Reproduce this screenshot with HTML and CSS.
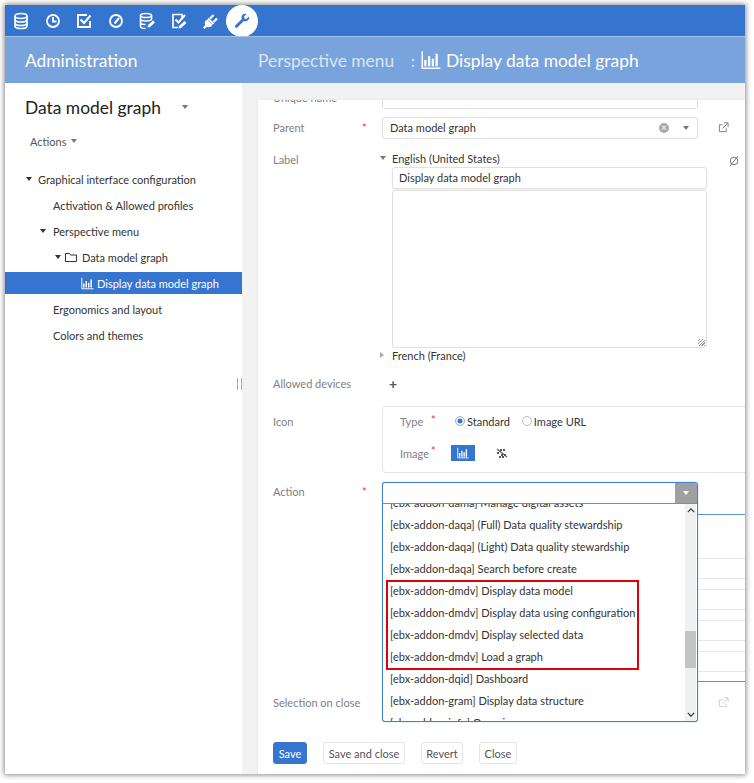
FILE: index.html
```html
<!DOCTYPE html>
<html lang="en">
<head>
<meta charset="utf-8">
<title>Administration</title>
<link rel="stylesheet" href="styles.css">
</head>
<body>
<svg class="defs" width="0" height="0" aria-hidden="true">
  <symbol id="chart" viewBox="0 0 16 16"><path d="M1 1v13.500h14.500" fill="none" stroke="currentColor" stroke-width="1.200"/><path d="M3.500 8v5M6.500 5v8M9.500 7v6M12.500 3v10" fill="none" stroke="currentColor" stroke-width="1.800"/></symbol>
  <symbol id="ext" viewBox="0 0 12 12"><path d="M9 7v3.500H1.500V3H5M6.500 1H11v4.500M11 1L5 7" fill="none" stroke="currentColor" stroke-width="1"/></symbol>
</svg>
<div class="frame">
  <nav class="topbar">
    <svg class="ti" viewBox="0 0 18 18"><g fill="none" stroke="#fff" stroke-width="1.700"><ellipse cx="9" cy="4" rx="6" ry="2.500"/><path d="M3 4v10c0 1.400 2.700 2.500 6 2.500s6-1.100 6-2.500V4M3 7.500c0 1.400 2.700 2.500 6 2.500s6-1.100 6-2.500M3 11c0 1.400 2.700 2.500 6 2.500s6-1.100 6-2.500"/></g></svg>
    <svg class="ti" viewBox="0 0 18 18"><g fill="none" stroke="#fff" stroke-width="1.800"><circle cx="9" cy="9" r="6"/><path d="M9 5v4.500h3.500"/></g></svg>
    <svg class="ti" viewBox="0 0 18 18"><g fill="none" stroke="#fff" stroke-width="1.800"><path d="M15 9v6H3V3h9"/><path d="M5.500 7.500L9 11l6.500-7.500" stroke-width="2"/></g></svg>
    <svg class="ti" viewBox="0 0 18 18"><g fill="none" stroke="#fff" stroke-width="1.800"><circle cx="9" cy="9" r="6"/><path d="M7.500 11.500L12 6" stroke-width="2"/></g></svg>
    <svg class="ti" viewBox="0 0 18 18"><g fill="none" stroke="#fff" stroke-width="1.600"><ellipse cx="8" cy="3.500" rx="5.500" ry="2"/><path d="M2.500 3.500v11c0 1 2 2 5 2M13.500 3.500v4M2.500 7c0 1 2 2 5.500 2s5.500-1 5.500-2M2.500 10.500c0 1 2 2 5 2"/></g><path d="M9.500 15.500l.5-2.500 5-4.500 2 2-5 4.500z" fill="#fff"/></svg>
    <svg class="ti" viewBox="0 0 18 18"><g fill="none" stroke="#fff" stroke-width="1.700"><path d="M8 15.500H3V2.500h9v3"/><path d="M5.500 7.500L8.500 10.500 15 3" stroke-width="2"/></g><path d="M8.500 16.500l.5-2.500 5.500-5 2 2-5.500 5z" fill="#fff"/></svg>
    <svg class="ti" viewBox="0 0 18 18"><path d="M6 7.500l5.500 5.500-1.500 1.500c-1.500 1-3 1-4 .2L3.500 17l-1.500-1.500 2.300-2.500c-.8-1-.8-2.500.2-4z" fill="#fff"/><path d="M9 6.500l3.500-3.500M12.500 10l3.500-3.500" stroke="#fff" stroke-width="2.200" fill="none"/><path d="M7 6.500l5.500 5.500" stroke="#fff" stroke-width="2" fill="none"/></svg>
    <span class="active">
      <svg viewBox="0 0 16 16" width="16" height="16"><path d="M15 3.500l-2.500 2.500-2-.5-.5-2L12.500 1C10.800.4 9 1 8.200 2.200 7.400 3.300 7.300 4.700 7.800 6L1.500 12.300c-.7.700-.7 1.500-.1 2.100.6.600 1.500.6 2.200-.1L9.900 8c1.300.5 2.700.4 3.800-.4C15 6.700 15.600 5.200 15 3.500z" fill="#3575d0"/></svg>
    </span>
  </nav>
  <header class="subbar">
    <div class="subtitle">Administration</div>
    <div class="crumbs">
      <span class="crumb-a">Perspective menu</span>
      <span class="sep">:</span>
      <svg class="crumb-i"><use href="#chart"/></svg>
      <span>Display data model graph</span>
    </div>
  </header>
  <div class="main">
    <aside class="side">
      <div class="side-title"><span>Data model graph</span><i class="caret c-gray"></i></div>
      <div class="actions"><span>Actions</span><i class="caret c-gray"></i></div>
      <ul class="tree">
        <li class="l0"><i class="caret c-dark"></i>Graphical interface configuration</li>
        <li class="l1">Activation &amp; Allowed profiles</li>
        <li class="l1 open"><i class="caret c-dark"></i>Perspective menu</li>
        <li class="l2"><i class="caret c-dark"></i>
          <svg class="folder" viewBox="0 0 12 11"><path d="M.5 9.500v-8h4l1 1.500h6v6.500z" fill="none" stroke="#333" stroke-width="1"/></svg>Data model graph</li>
        <li class="l3 sel"><svg class="chart"><use href="#chart"/></svg>Display data model graph</li>
        <li class="l1">Ergonomics and layout</li>
        <li class="l1">Colors and themes</li>
      </ul>
      <div class="grip"></div>
    </aside>
    <section class="content">
      <div class="panel">
        <div class="form">
          <div class="row r-unique"><label>Unique name</label><b class="req"></b><div class="inp"></div></div>
          <div class="row r-parent"><label>Parent</label><b class="req">*</b>
            <div class="inp">Data model graph
              <span class="tools"><span class="clear">×</span><i class="caret c-gray"></i></span>
            </div>
            <svg class="ext"><use href="#ext"/></svg>
          </div>
          <div class="row r-label"><label>Label</label><b class="req"></b>
            <div class="langs">
              <div class="lang"><i class="caret c-gray"></i>English (United States)</div>
              <div class="lang-input">Display data model graph</div>
              <div class="lang-area"><span class="resize"></span></div>
              <div class="lang lang-fr"><i class="caret-r"></i>French (France)</div>
            </div>
            <svg class="noeye" viewBox="0 0 12 12"><circle cx="6" cy="6" r="3.800" fill="none" stroke="#777"/><path d="M2 11L10 1" stroke="#777"/></svg>
          </div>
          <div class="row r-dev"><label>Allowed devices</label><b class="req"></b><span class="plus">+</span></div>
          <div class="row r-icon"><label>Icon</label><b class="req"></b>
            <div class="iconbox">
              <div class="ib-row">
                <span class="ib-l">Type</span><b class="req ib-req">*</b>
                <span class="radio on"></span><span class="rl">Standard</span>
                <span class="radio"></span><span class="rl">Image URL</span>
              </div>
              <div class="ib-row ib-2">
                <span class="ib-l2">Image</span><b class="req">*</b>
                <span class="pick"><svg class="chart"><use href="#chart"/></svg></span>
                <svg class="noimg" viewBox="0 0 14 14"><path d="M2 3l10 8" stroke="#666" stroke-width="1.500"/><path d="M2 7h2M5 4h6M6 9h6M4 11h5" stroke="#555" stroke-width="2" stroke-dasharray="2 1"/></svg>
              </div>
            </div>
          </div>
          <div class="row r-action"><label>Action</label><b class="req">*</b>
            <div class="under">
              <div class="u-box"></div><div class="u-box"></div><div class="u-box"></div><div class="u-box"></div>
            </div>
          </div>
          <div class="row r-close"><label>Selection on close</label><b class="req"></b>
            <svg class="ext faded"><use href="#ext"/></svg>
          </div>
        </div>
        <div class="buttons">
          <button class="btn primary b-save">Save</button>
          <button class="btn b-sc">Save and close</button>
          <button class="btn b-rev">Revert</button>
          <button class="btn b-close">Close</button>
        </div>
        <div class="combo">
          <div class="combo-top"><span class="combo-arrow"><i class="caret c-white"></i></span></div>
          <div class="combo-list">
            <div class="opts">
              <div class="opt">[ebx-addon-dama] Manage digital assets</div>
              <div class="opt">[ebx-addon-daqa] (Full) Data quality stewardship</div>
              <div class="opt">[ebx-addon-daqa] (Light) Data quality stewardship</div>
              <div class="opt">[ebx-addon-daqa] Search before create</div>
              <div class="opt">[ebx-addon-dmdv] Display data model</div>
              <div class="opt">[ebx-addon-dmdv] Display data using configuration</div>
              <div class="opt">[ebx-addon-dmdv] Display selected data</div>
              <div class="opt">[ebx-addon-dmdv] Load a graph</div>
              <div class="opt">[ebx-addon-dqid] Dashboard</div>
              <div class="opt">[ebx-addon-gram] Display data structure</div>
              <div class="opt">[ebx-addon-info] Overview</div>
            </div>
            <div class="sb">
              <svg class="sb-a" viewBox="0 0 10 6"><path d="M1 5l4-4 4 4" fill="none" stroke="#333" stroke-width="1.500"/></svg>
              <div class="sb-thumb"></div>
              <svg class="sb-b" viewBox="0 0 10 6"><path d="M1 1l4 4 4-4" fill="none" stroke="#333" stroke-width="1.500"/></svg>
            </div>
          </div>
        </div>
        <div class="highlight"></div>
      </div>
    </section>
  </div>
</div>
</body>
</html>
```
FILE: styles.css
```css
* { box-sizing: border-box; }
html, body { margin: 0; padding: 0; height: 100%; background: #fff; overflow: hidden; }
body { font-family: Lato, "Open Sans", sans-serif; font-size: 11px; color: #333; }
.defs { position: absolute; }
i { font-style: normal; }
.frame {
  width: 740px; height: 769px; margin: 5px 0 0 5px;
  display: flex; flex-direction: column; overflow: hidden; background: #f2f2f2;
  box-shadow: 0 0 5px 1px #8a8a8a;
}
.topbar { height: 31px; background: #3575d0; display: flex; align-items: center; padding-left: 7px; flex: none; }
.ti { width: 18px; height: 18px; margin-right: 13.500px; flex: none; }
.active { width: 32px; height: 32px; margin-left: -7px; border-radius: 50%; background: #fff; display: flex; align-items: center; justify-content: center; flex: none; }
.subbar { height: 47px; background: #79a3dc; border-top: 1px solid #a5c0e6; display: flex; align-items: center; color: #fff; flex: none; font-size: 17.400px; }
.subtitle { width: 233px; padding-left: 20px; }
.crumbs { display: flex; align-items: center; white-space: nowrap; }
.crumb-a { color: #d9e5f5; padding-left: 20px; box-sizing: content-box; width: 136px; }
.sep { margin-left: 17px; margin-right: 6px; font-size: 16px; color: #e8eff9; }
.crumb-i { width: 20px; height: 20px; margin-right: 5px; }
.main { flex: 1; display: flex; min-height: 0; }
.side { width: 237px; background: #fff; position: relative; flex: none; }
.side-title { font-size: 17.400px; color: #222; padding: 2px 0 0 20px; height: 46px; display: flex; align-items: center; }
.side-title .caret { margin-left: 21px; margin-top: -1px; }
.actions { padding-left: 25px; height: 22px; display: flex; align-items: center; color: #555; margin-top: 1px; }
.actions .caret { margin-left: 5px; }
.tree { list-style: none; margin: 16px 0 0; padding: 0; }
.tree li { height: 22px; margin-bottom: 4px; display: flex; align-items: center; white-space: nowrap; color: #333; }
.l0 { padding-left: 21px; }
.l0 .caret { margin-right: 6px; }
.l1 { padding-left: 48px; }
.tree .l1.open { padding-left: 35px; }
.l1.open .caret { margin-right: 7px; }
.l2 { padding-left: 50px; }
.folder { width: 12px; height: 11px; margin: 0 5px 0 4px; }
.tree .sel { background: #3575d0; color: #fff; padding-left: 76px; }
.chart { width: 13px; height: 13px; margin-right: 3px; }
.caret { display: inline-block; width: 0; height: 0; border-style: solid; border-width: 4px 3.500px 0; border-color: #333 transparent transparent; }
.c-gray { border-top-color: #777; }
.c-white { border-top-color: #fff; }
.caret-r { display: inline-block; width: 0; height: 0; border-style: solid; border-width: 3.500px 0 3.500px 4px; border-color: transparent transparent transparent #aaa; margin-right: 8px; }
.grip { position: absolute; right: 0; top: 295px; width: 5px; height: 12px; border-left: 1px solid #aaa; border-right: 1px solid #aaa; }
.content { flex: 1; padding: 17px 0 0 16px; min-width: 0; }
.panel { background: #fff; height: 100%; position: relative; overflow: hidden; box-shadow: 0 0 2px #ddd; }
.form { padding-left: 15px; margin-top: -13px; }
.row { display: flex; align-items: flex-start; position: relative; }
.row label { width: 89px; color: #808080; flex: none; line-height: 22px; white-space: nowrap; }
.req { color: #e33; font-weight: 400; width: 20px; flex: none; line-height: 22px; font-size: 11px; }
.inp { width: 316px; height: 22px; border: 1px solid #e0e0e0; border-radius: 3px; padding-left: 7px; line-height: 20px; position: relative; flex: none; }
.r-unique { height: 22px; margin-bottom: 8px; }
.r-parent { height: 22px; margin-bottom: 10px; }
.tools { position: absolute; right: 8px; top: 0; height: 20px; display: flex; align-items: center; }
.clear { width: 10px; height: 10px; border-radius: 50%; background: #aaa; color: #fff; font-size: 10px; line-height: 9px; text-align: center; margin-right: 14px; }
.ext { width: 11px; height: 11px; margin: 5px 0 0 20px; color: #777; flex: none; }
.ext.faded { color: #ccc; }
.langs { width: 330px; margin-left: -7px; flex: none; }
.lang { height: 22px; display: flex; align-items: center; padding-left: 5px; margin-top: -2px; }
.lang .caret { margin-right: 6px; }
.lang-input { width: 315px; height: 22px; margin-left: 17px; margin-top: -2px; border: 1px solid #e0e0e0; border-radius: 3px; padding-left: 6px; line-height: 20px; box-shadow: 0 1px 2px #eee; }
.lang-area { width: 315px; height: 158px; margin: 1px 0 0 17px; border: 1px solid #e0e0e0; border-radius: 3px; position: relative; }
.lang-fr { height: 14px; margin-top: 0; }
.resize { position: absolute; right: 1px; bottom: 1px; width: 7px; height: 7px; background: repeating-linear-gradient(135deg, transparent 0 1px, #999 1px 2px); }
.noeye { width: 12px; height: 12px; position: absolute; left: 455px; top: 6px; }
.r-label { height: 220px; margin-bottom: 4px; }
.r-dev { height: 22px; margin-bottom: 11px; }
.plus { margin-left: 7px; font-size: 14px; line-height: 22px; color: #555; font-weight: 700; }
.r-icon { height: 67px; margin-bottom: 8px; }
.r-icon label { line-height: 32px; }
.iconbox { position: absolute; left: 109px; top: 0; width: 380px; height: 67px; border: 1px solid #e4e4e4; border-radius: 4px; padding: 3px 0 0 17px; }
.ib-row { display: flex; align-items: center; height: 22px; }
.ib-l { color: #808080; width: 31px; }
.ib-req { width: 24px; margin-top: -2px; }
.radio { width: 10px; height: 10px; border-radius: 50%; border: 1px solid #bbb; margin-right: 2px; flex: none; }
.radio.on { background: #3575d0; box-shadow: inset 0 0 0 1.500px #fff; border-color: #bbb; }
.rl { margin-right: 12px; }
.ib-2 { margin-top: 10px; }
.ib-l2 { color: #808080; width: 31px; }
.ib-2 .req { width: 20px; margin-top: -5px; }
.pick { width: 24px; height: 16px; background: #3575d0; color: #fff; display: flex; align-items: center; justify-content: center; }
.pick .chart { margin: 0; width: 12px; height: 12px; }
.noimg { width: 14px; height: 14px; margin-left: 20px; }
.r-action { height: 211px; }
.under { position: absolute; left: 109px; top: 33px; width: 380px; height: 168px; border-top: 1px solid #5b93dd; border-bottom: 1px solid #5b93dd; padding-top: 43px; display: flex; flex-direction: column; gap: 10px; }
.u-box { height: 21px; flex: none; border: 1px solid #e8e8e8; }
.r-close { height: 22px; }
.r-close .ext { position: absolute; left: 445px; margin: 5px 0 0; }
.buttons { display: flex; gap: 16px; padding-left: 15px; margin-top: 28px; }
.btn { height: 22px; font: inherit; color: #555; background: #fff; border: 1px solid #e4e4e4; border-radius: 3px; padding: 0; }
.primary { background: #3575d0; border-color: #3575d0; color: #fff; }
.b-save { width: 34px; }
.b-sc { width: 82px; }
.b-rev { width: 42px; }
.b-close { width: 38px; }
.combo { position: absolute; left: 124px; top: 382px; width: 316px; height: 240px; border: 1px solid #3f80d8; border-radius: 3px; background: #fff; overflow: hidden; box-shadow: 0 0 1px #3f80d8; }
.combo-top { height: 21px; border-bottom: 1px solid #5b93dd; display: flex; justify-content: flex-end; }
.combo-arrow { width: 22px; height: 20px; background: #a0a0a0; display: flex; align-items: center; justify-content: center; }
.combo-list { display: flex; height: 217px; overflow: hidden; position: relative; }
.opts { flex: 1; margin-top: -12px; }
.opt { height: 22px; line-height: 22px; padding-left: 7px; white-space: nowrap; color: #333; }
.sb { width: 11px; background: #f0f0f0; position: relative; flex: none; margin-right: 1px; margin-left: 1px; }
.sb-a { position: absolute; left: 2px; top: 4px; width: 8px; height: 5px; }
.sb-b { position: absolute; left: 2px; bottom: 4px; width: 8px; height: 5px; }
.sb-thumb { position: absolute; left: 0; right: 0; top: 127px; height: 37px; background: #c4c4c4; }
.highlight { position: absolute; left: 128px; top: 480px; width: 253px; height: 90px; border: 2px solid #e0000c; pointer-events: none; }
```
